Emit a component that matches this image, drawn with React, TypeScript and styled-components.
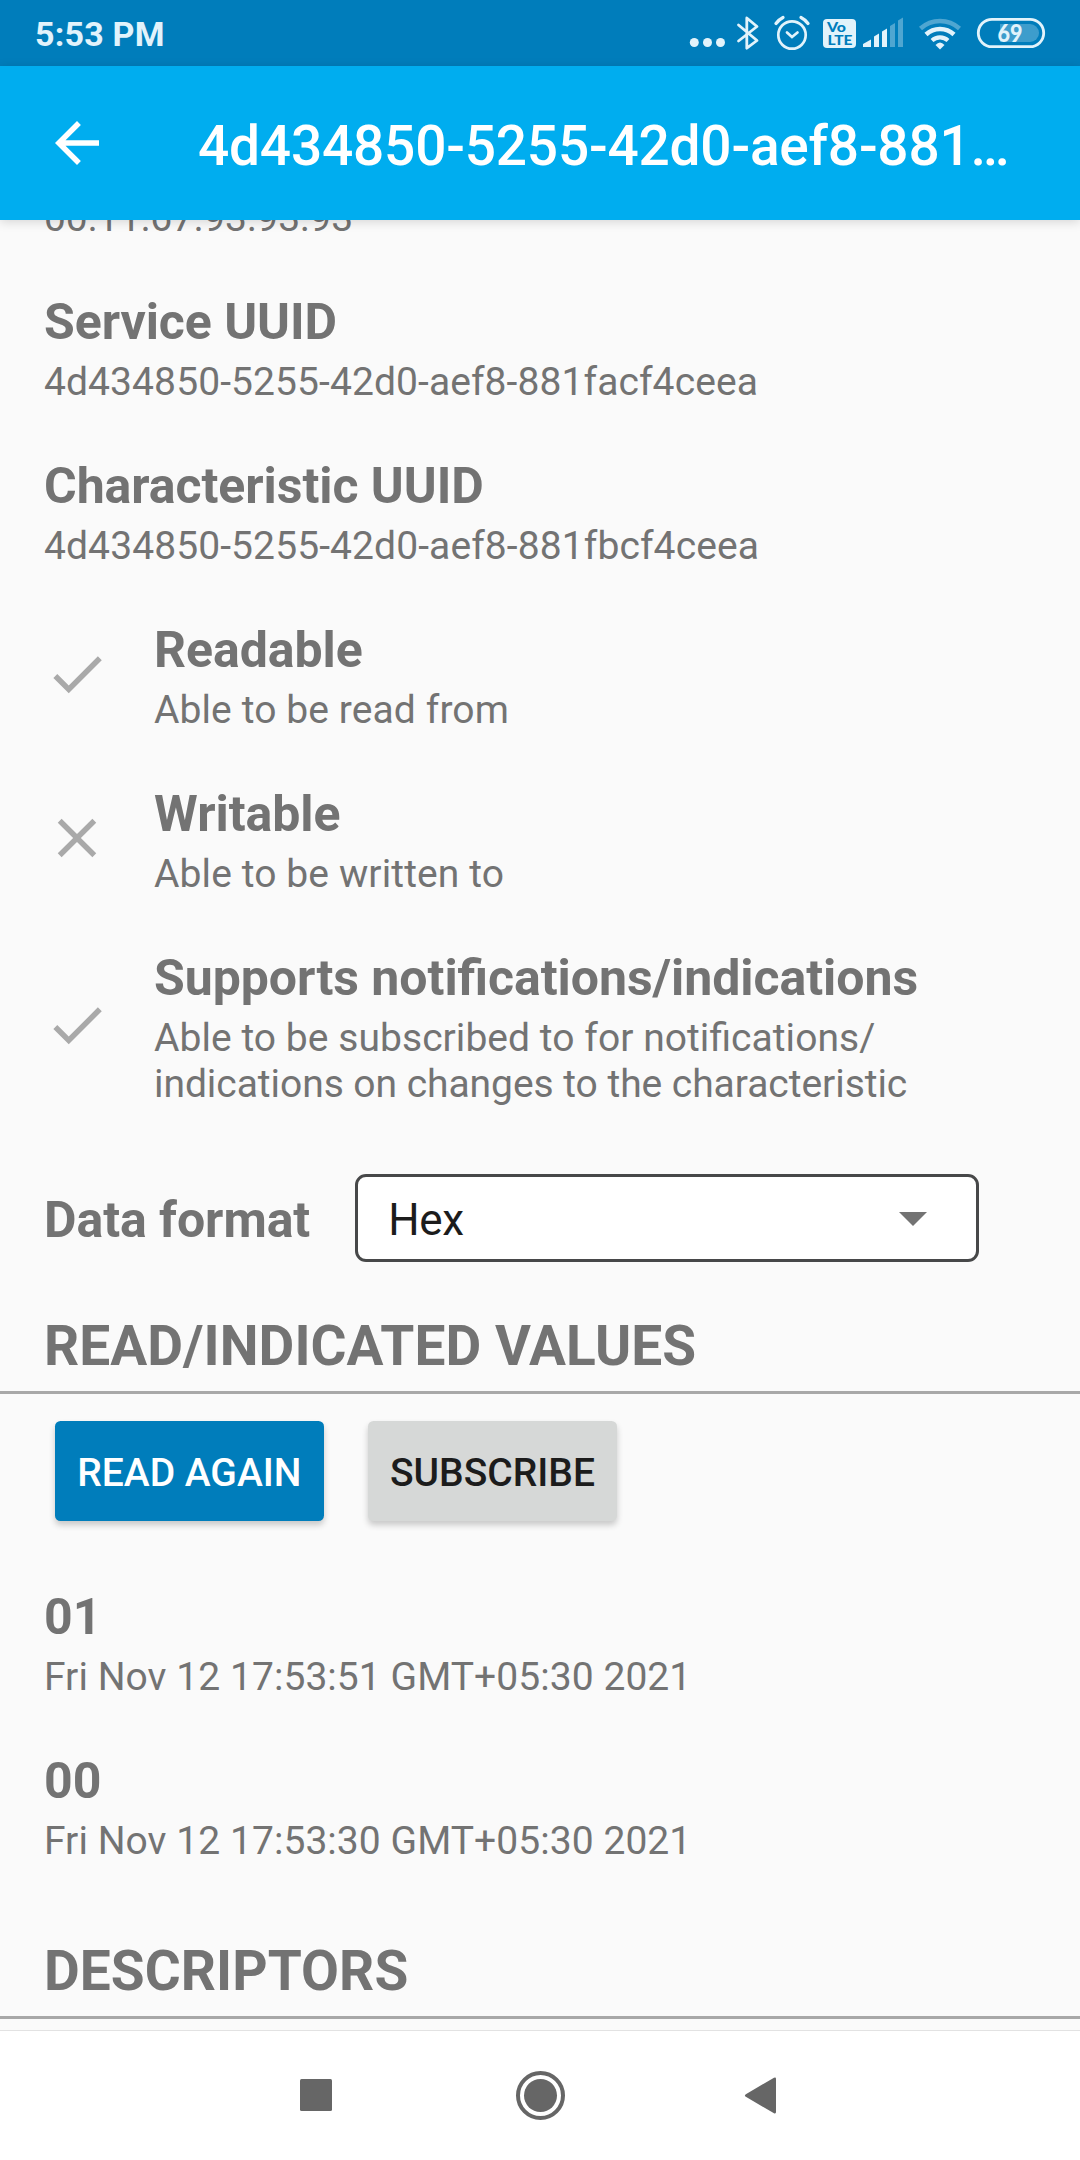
import React from "react";
import styled, { createGlobalStyle } from "styled-components";

const GlobalStyle = createGlobalStyle`
  * { box-sizing: border-box; }
  body { margin: 0; background: #fafafa; }
`;

const Screen = styled.div`
  width: 1080px;
  height: 2160px;
  display: flex;
  flex-direction: column;
  overflow: hidden;
  background: #fafafa;
  color: #737373;
  font-family: Roboto, "Liberation Sans", sans-serif;
`;

const StatusBar = styled.header`
  flex: none;
  height: 66px;
  display: flex;
  align-items: center;
  justify-content: space-between;
  padding: 0 34px 0 35px;
  background: #007dbb;
  color: #e2f3fb;
`;

const Clock = styled.span`
  font-size: 34px;
  line-height: 40px;
  font-weight: 700;
  letter-spacing: 0.2px;
  margin-top: 2px;
`;

const StatusIcons = styled.svg`
  display: block;
  width: 366px;
  height: 66px;
`;

const AppBar = styled.nav`
  flex: none;
  height: 154px;
  display: flex;
  align-items: center;
  padding: 0 44px;
  background: #00adef;
  color: #fff;
  box-shadow: 0 2px 10px rgba(0, 0, 0, 0.15);
  z-index: 1;
`;

const Icon = styled.svg`
  flex: none;
  display: block;
  width: 66px;
  height: 66px;
  fill: currentColor;
`;

const AppTitle = styled.h1`
  flex: 1;
  min-width: 0;
  margin: 6px 0 0 88px;
  white-space: nowrap;
  font-size: 55px;
  line-height: 64px;
  font-weight: 500;
  letter-spacing: -0.2px;
`;

const Content = styled.main`
  flex: 1;
  min-height: 0;
  overflow: hidden;
`;

const ScrolledList = styled.div`
  display: flex;
  flex-direction: column;
  margin-top: -91px;
`;

const Entries = styled.section<{ $top?: number }>`
  display: flex;
  flex-direction: column;
  gap: 52px;
  padding: 0 44px;
  margin-top: ${(p) => p.$top ?? 0}px;
`;

const Entry = styled.article`
  display: flex;
  align-items: center;
  gap: 44px;
`;

const IconSlot = styled.div`
  flex: none;
  padding-bottom: 6px;
  color: #a9a9a9;
`;

const EntryText = styled.div`
  display: flex;
  flex-direction: column;
`;

const EntryTitle = styled.h2`
  margin: 0;
  font-size: 50px;
  line-height: 58px;
  font-weight: 700;
  letter-spacing: -0.05px;
  font-feature-settings: "liga" 1;
  white-space: nowrap;
`;

const EntryDetail = styled.p<{ $tracking: number }>`
  margin: 0;
  font-size: 39px;
  line-height: 46px;
  letter-spacing: ${(p) => p.$tracking}px;
  font-feature-settings: "liga" 1;
  white-space: nowrap;

  ${EntryTitle} + & {
    margin-top: 8px;
  }
`;

const FormatRow = styled.div`
  display: flex;
  align-items: center;
  gap: 45px;
  margin-top: 67px;
  padding-left: 44px;
`;

const FormatLabel = styled(EntryTitle)`
  padding-top: 3px;
`;

const Select = styled.button`
  width: 624px;
  height: 88px;
  display: flex;
  align-items: center;
  justify-content: space-between;
  padding: 0 49px 0 30px;
  border: 3px solid #474849;
  border-radius: 11px;
  background: #fff;
  color: #1c1c1c;
  font: 400 44px/52px Roboto, sans-serif;
`;

const SelectValue = styled.span`
  padding-top: 3px;
  letter-spacing: -0.3px;
`;

const Caret = styled.svg`
  width: 28px;
  height: 14px;
  margin-top: 2px;
  fill: #737373;
`;

const SectionHeader = styled.h2<{ $top: number }>`
  margin: ${(p) => p.$top}px 0 0;
  height: 80px;
  padding-left: 44px;
  border-bottom: 3px solid #a8a8a8;
  font-size: 55px;
  line-height: 64px;
  font-weight: 700;
  letter-spacing: 0.06px;
`;

const Actions = styled.div`
  display: flex;
  gap: 44px;
  margin-top: 27px;
  padding-left: 55px;
`;

const ActionButton = styled.button<{ $primary?: boolean }>`
  height: 100px;
  padding: 3px 22.2px 0;
  border: 0;
  border-radius: 5.5px;
  background: ${(p) => (p.$primary ? "#007dbb" : "#d6d8d7")};
  color: ${(p) => (p.$primary ? "#fff" : "#1c1c1c")};
  box-shadow: 0 4px 6px rgba(0, 0, 0, 0.2);
  font: 500 39px/46px Roboto, sans-serif;
`;

const NavBar = styled.footer`
  flex: none;
  height: 130px;
  border-top: 1px solid #e2e2e2;
  background: #fff;
`;

const NavIcons = styled.svg`
  display: block;
  width: 1080px;
  height: 129px;
  fill: #666;
`;

const CHECK = "M9 16.17 4.83 12l-1.42 1.41L9 19 21 7l-1.41-1.41z";
const CLOSE =
  "M19 6.41 17.59 5 12 10.59 6.41 5 5 6.41 10.59 12 5 17.59 6.41 19 12 13.41 17.59 19 19 17.59 13.41 12z";
const BACK = "M20 11H7.83l5.59-5.59L12 4l-8 8 8 8 1.41-1.41L7.83 13H20v-2z";

type DetailLine = { text: string; tracking: number };
type EntryProps = { icon?: string; title: string; lines: DetailLine[] };

const identifiers: EntryProps[] = [
  { title: "", lines: [{ text: "00:11:67:93:93:93", tracking: -0.07 }] },
  {
    title: "Service UUID",
    lines: [{ text: "4d434850-5255-42d0-aef8-881facf4ceea", tracking: 0.09 }],
  },
  {
    title: "Characteristic UUID",
    lines: [{ text: "4d434850-5255-42d0-aef8-881fbcf4ceea", tracking: 0.1 }],
  },
];

const properties: EntryProps[] = [
  { icon: CHECK, title: "Readable", lines: [{ text: "Able to be read from", tracking: 0.1 }] },
  { icon: CLOSE, title: "Writable", lines: [{ text: "Able to be written to", tracking: 0.11 }] },
  {
    icon: CHECK,
    title: "Supports notifications/indications",
    lines: [
      { text: "Able to be subscribed to for notifications/", tracking: 0.05 },
      { text: "indications on changes to the characteristic", tracking: -0.05 },
    ],
  },
];

const readings: EntryProps[] = [
  { title: "01", lines: [{ text: "Fri Nov 12 17:53:51 GMT+05:30 2021", tracking: 0.06 }] },
  { title: "00", lines: [{ text: "Fri Nov 12 17:53:30 GMT+05:30 2021", tracking: 0.06 }] },
];

function InfoEntry({ icon, title, lines }: EntryProps) {
  return (
    <Entry>
      {icon && (
        <IconSlot>
          <Icon viewBox="0 0 24 24"><path d={icon} /></Icon>
        </IconSlot>
      )}
      <EntryText>
        <EntryTitle>{title || "\u00a0"}</EntryTitle>
        {lines.map((line) => (
          <EntryDetail key={line.text} $tracking={line.tracking}>{line.text}</EntryDetail>
        ))}
      </EntryText>
    </Entry>
  );
}

function SystemStatus() {
  return (
    <StatusIcons viewBox="680 0 366 66" fill="#e2f3fb">
      <circle cx="694.3" cy="42.5" r="4.5" />
      <circle cx="707.5" cy="42.5" r="4.5" />
      <circle cx="720.5" cy="42.5" r="4.5" />
      <path d="M738.5 25 757 40.5l-10.2 7.7V18L757 26.5 738.5 41" fill="none" stroke="#e2f3fb" strokeWidth="2.8" strokeLinecap="round" strokeLinejoin="round" />
      <g fill="none" stroke="#e2f3fb" strokeLinecap="round">
        <circle cx="792" cy="35" r="13.7" strokeWidth="2.7" />
        <path d="m787 32.5 5 4.5 5.5-4.5" strokeWidth="2.7" />
        <path d="M776 23.5q3-4 7-6M808 23.5q-3-4-7-6" strokeWidth="3.3" />
      </g>
      <rect x="823" y="19" width="33" height="29" rx="4" />
      <g fill="#007dbb" fontFamily="Lato, sans-serif" fontWeight="900">
        <text x="827" y="31.5" fontSize="13" textLength="19" lengthAdjust="spacingAndGlyphs">Vo</text>
        <text x="827.5" y="45" fontSize="13.5" textLength="25" lengthAdjust="spacingAndGlyphs">LTE</text>
      </g>
      <path d="M863 47v-3l8-4.5V47zM874 47V36.5l5-3V47zM882 47V31.5l5-3V47z" />
      <path d="M890 47V26l5-3v24zM898 47V20.5l5-3V47z" opacity=".35" />
      <g fill="none" stroke="#e2f3fb">
        <path d="M920.5 28.5a29 29 0 0 1 39 0" strokeWidth="4.5" opacity=".35" />
        <path d="M926 34.5a20.5 20.5 0 0 1 28 0" strokeWidth="4.5" />
        <path d="M932 40.5a12 12 0 0 1 16 0" strokeWidth="4.2" />
      </g>
      <path d="M935.5 45q4.5-5 9 0L940 49.5z" />
      <path d="M1000 24h30a9 9 0 0 1 0 18h-30z" opacity=".27" />
      <rect x="978.3" y="19.3" width="65.4" height="27.4" rx="13.7" fill="none" stroke="#e2f3fb" strokeWidth="2.8" />
      <text x="997.5" y="42" fontFamily="Lato, sans-serif" fontWeight="900" fontSize="24" textLength="25" lengthAdjust="spacingAndGlyphs">69</text>
    </StatusIcons>
  );
}

export default function App() {
  return (
    <Screen>
      <GlobalStyle />
      <StatusBar>
        <Clock>5:53 PM</Clock>
        <SystemStatus />
      </StatusBar>
      <AppBar>
        <Icon viewBox="0 0 24 24"><path d={BACK} /></Icon>
        <AppTitle>4d434850-5255-42d0-aef8-881…</AppTitle>
      </AppBar>
      <Content>
        <ScrolledList>
          <Entries>
            {identifiers.map((item) => <InfoEntry key={item.title} {...item} />)}
            {properties.map((item) => <InfoEntry key={item.title} {...item} />)}
          </Entries>
          <FormatRow>
            <FormatLabel>Data format</FormatLabel>
            <Select>
              <SelectValue>Hex</SelectValue>
              <Caret viewBox="0 0 28 14"><path d="M0 0h28L14 14z" /></Caret>
            </Select>
          </FormatRow>
          <SectionHeader $top={52}>READ/INDICATED VALUES</SectionHeader>
          <Actions>
            <ActionButton $primary>READ AGAIN</ActionButton>
            <ActionButton>SUBSCRIBE</ActionButton>
          </Actions>
          <Entries $top={67}>
            {readings.map((item) => <InfoEntry key={item.title} {...item} />)}
          </Entries>
          <SectionHeader $top={75}>DESCRIPTORS</SectionHeader>
        </ScrolledList>
      </Content>
      <NavBar>
        <NavIcons viewBox="0 2031 1080 129">
          <rect x="300" y="2079" width="32" height="32" rx="1.5" />
          <circle cx="540.5" cy="2095.5" r="16.5" />
          <circle cx="540.5" cy="2095.5" r="22.5" fill="none" stroke="#666" strokeWidth="4" />
          <path d="M745.8 2094.2 774 2077.8Q776 2077 776 2079v33Q776 2114 774 2113.2L745.8 2096.8Q744 2095.5 745.8 2094.2z" />
        </NavIcons>
      </NavBar>
    </Screen>
  );
}
